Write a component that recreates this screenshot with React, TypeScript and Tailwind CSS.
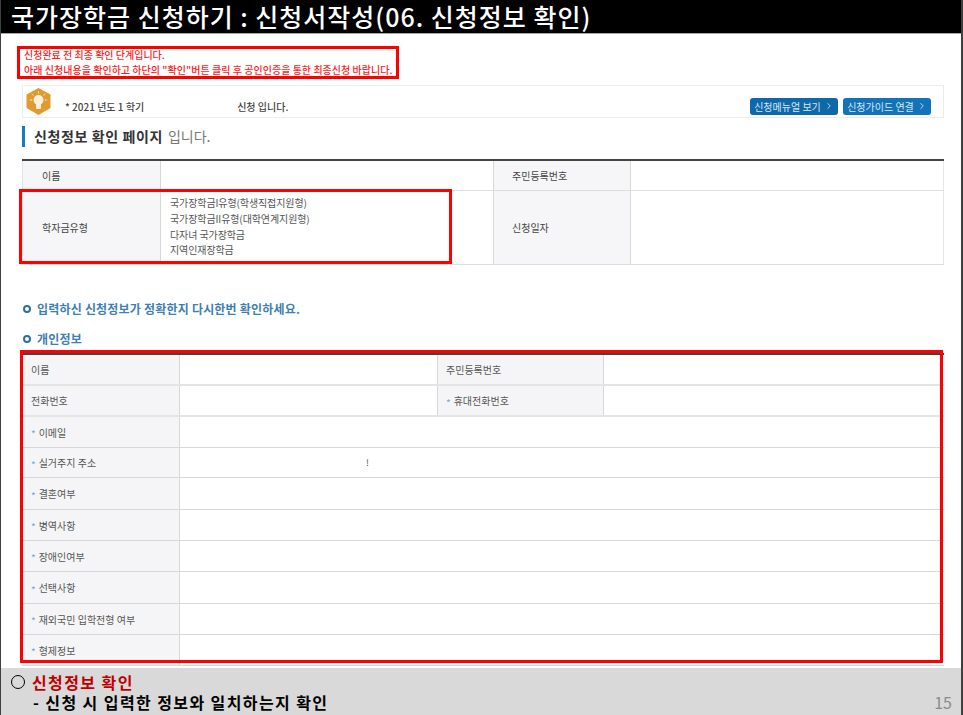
import { ChevronRight } from 'lucide-react';

const FONT = "font-['Noto_Sans_CJK_KR','Noto_Sans',sans-serif]";

const PERSONAL_ROWS = [
  { label: '이메일', height: 'h-[31px]' },
  { label: '실거주지 주소', height: 'h-[30px]', value: '!' },
  { label: '결혼여부', height: 'h-[32px]' },
  { label: '병역사항', height: 'h-[31px]' },
  { label: '장애인여부', height: 'h-[31px]' },
  { label: '선택사항', height: 'h-[32px]' },
  { label: '재외국민 입학전형 여부', height: 'h-[31px]' },
  { label: '형제정보', height: 'h-[31px]' },
];

const SCHOLARSHIPS = [
  '국가장학금I유형(학생직접지원형)',
  '국가장학금II유형(대학연계지원형)',
  '다자녀 국가장학금',
  '지역인재장학금',
];

function Star() {
  return <span className="mr-[3px] translate-y-[2px] text-[10px] leading-none text-[#6fa8de]">*</span>;
}

function BulbIcon() {
  return (
    <svg width="25" height="27" viewBox="0 0 25 27" className="shrink-0">
      <polygon points="12.5,0 24.5,6.5 24.5,20 12.5,27 0.5,20 0.5,6.5" fill="#e19a2e" />
      <circle cx="12.5" cy="12" r="5" fill="#f7f0dc" />
      <rect x="10" y="15.5" width="5" height="5.5" rx="1" fill="#f7f0dc" />
      <g stroke="#f7e3b5" strokeWidth="1" strokeLinecap="round">
        <path d="M12.5 3.6v1.6M6 6l1.2 1.1M19 6l-1.2 1.1M4.2 12h1.6M19.2 12h1.6" />
      </g>
    </svg>
  );
}

function GuideButton({ label, dark }: { label: string; dark?: boolean }) {
  return (
    <div
      className={`flex h-[17px] w-[88px] items-center justify-center gap-[3px] rounded-[3px] text-[10px] text-[#d7e8f5] ${
        dark ? 'bg-[#0f69a8]' : 'bg-[#1373b7]'
      }`}
    >
      {label}
      <ChevronRight size={10} strokeWidth={2} />
    </div>
  );
}

function SectionTitle({ children }: { children: string }) {
  return (
    <div className="flex items-center text-[12px] font-bold tracking-[0.2px] text-[#3d7fb5]">
      <span className="mr-[6px] h-[8px] w-[8px] rounded-full border-2 border-[#2f6f9f]" />
      {children}
    </div>
  );
}

export default function App() {
  return (
    <div className={`flex h-[715px] w-[963px] flex-col overflow-hidden border-l border-r-2 border-[#404040] bg-white ${FONT}`}>
      {/* Slide title */}
      <div className="h-[33px] shrink-0 whitespace-nowrap bg-black pl-[10px] text-[25px] font-medium leading-[33px] tracking-[1px] text-white">
        국가장학금 신청하기 : 신청서작성(06. 신청정보 확인)
      </div>
      <div className="h-px shrink-0 bg-[#a6a6a6]" />

      {/* Captured page */}
      <div className="relative min-h-0 flex-1 overflow-hidden">
        <div className="ml-[16px] mt-[12px] h-[33px] w-[382px] border-[3px] border-[#ff0000] pl-[4px] text-[10px] font-medium leading-[15px] text-[#ff1a1a]">
          <div className="-mt-[2px]">신청완료 전 최종 확인 단계입니다.</div>
          <div className="whitespace-nowrap tracking-[0.03px]">아래 신청내용을 확인하고 하단의 "확인"버튼 클릭 후 공인인증을 통한 최종신청 바랍니다.</div>
        </div>

        <div className="ml-[21px] mt-[6px] flex h-[33px] w-[922px] items-center border border-[#ececec] pl-[3px] pr-[12px] text-[10px] text-[#444]">
          <BulbIcon />
          <span className="ml-[14px] mt-[10px] font-medium">* 2021 년도 1 학기</span>
          <span className="ml-[93px] mt-[10px] font-medium">신청 입니다.</span>
          <div className="ml-auto mt-[9px] flex gap-[5px]">
            <GuideButton label="신청메뉴얼 보기" dark />
            <GuideButton label="신청가이드 연결" />
          </div>
        </div>

        <div className="ml-[21px] mt-[8px] flex h-[21px] items-center border-l-[3px] border-[#1b7ac4] pl-[9px] text-[14px] font-bold tracking-[0.6px] text-[#333]">
          신청정보 확인 페이지<span className="ml-[5px] font-normal tracking-normal text-[#777]">입니다.</span>
        </div>

        {/* Summary table */}
        <div className="relative ml-[21px] mt-[12px] w-[922px] border-t-2 border-[#444] text-[10px] text-[#444]">
          <div className="grid h-[30px] grid-cols-[138px_333px_138px_1fr] border-b border-[#ddd]">
            <div className="flex items-center border-l border-[#e3e3e3] bg-[#f6f6f8] pl-[19px]">이름</div>
            <div className="border-l border-[#d8d8d8]" />
            <div className="flex items-center border-x border-[#d8d8d8] bg-[#f6f6f8] pl-[18px]">주민등록번호</div>
            <div className="border-r border-[#e8e8e8]" />
          </div>
          <div className="grid h-[74px] grid-cols-[138px_333px_138px_1fr] border-b border-[#ddd]">
            <div className="flex items-center border-l border-[#e3e3e3] bg-[#f6f6f8] pl-[19px]">학자금유형</div>
            <div className="flex flex-col justify-center border-l border-[#d8d8d8] pb-[2px] pl-[9px] leading-[15.6px] tracking-[-0.1px] text-[#555]">
              {SCHOLARSHIPS.map((item) => (
                <div key={item}>{item}</div>
              ))}
            </div>
            <div className="flex items-center border-x border-[#d8d8d8] bg-[#f6f6f8] pl-[18px]">신청일자</div>
            <div className="border-r border-[#e8e8e8]" />
          </div>
          {/* Red highlight round the scholarship row */}
          <div className="absolute left-[-3px] top-[28px] h-[75px] w-[433px] border-[3px] border-[#ff0000]" />
        </div>

        <div className="ml-[22px] mt-[35px]">
          <SectionTitle>입력하신 신청정보가 정확한지 다시한번 확인하세요.</SectionTitle>
        </div>
        <div className="ml-[22px] mt-[12px]">
          <SectionTitle>개인정보</SectionTitle>
        </div>

        {/* Personal info table */}
        <div className="relative ml-[21px] mt-[5px] w-[922px] border-t-2 border-[#444] text-[10px] text-[#555]">
          <div className="grid h-[31px] grid-cols-[157px_258px_167px_1fr] border-b-2 border-[#e4e4e4]">
            <div className="flex items-center bg-[#f5f5f7] pl-[9px]">이름</div>
            <div className="border-l border-[#d8d8d8]" />
            <div className="flex items-center border-x border-[#d8d8d8] bg-[#f5f5f7] pl-[8px]">주민등록번호</div>
            <div />
          </div>
          <div className="grid h-[31px] grid-cols-[157px_258px_167px_1fr] border-b-2 border-[#e4e4e4]">
            <div className="flex items-center bg-[#f5f5f7] pl-[9px]">전화번호</div>
            <div className="border-l border-[#d8d8d8]" />
            <div className="flex items-center border-x border-[#d8d8d8] bg-[#f5f5f7] pl-[8px]">
              <Star />휴대전화번호
            </div>
            <div />
          </div>
          {PERSONAL_ROWS.map((row) => (
            <div key={row.label} className={`grid grid-cols-[157px_1fr] border-b border-[#d8d8d8] ${row.height}`}>
              <div className="flex items-center bg-[#f5f5f7] pl-[9px]">
                <Star />
                {row.label}
              </div>
              <div className="flex items-center border-l border-[#d8d8d8] pl-[186px] text-[9px]">{row.value}</div>
            </div>
          ))}
          {/* Red highlight round the whole table */}
          <div className="absolute left-[-2px] top-[-5px] h-[313px] w-[923px] border-[3px] border-[#ff0000]" />
        </div>
      </div>

      {/* Slide footer */}
      <div className="relative flex h-[47px] shrink-0 flex-col justify-center bg-[#d9d9d9] pl-[10px] text-[16px] font-bold leading-[20px] tracking-[1.4px] text-black">
        <div className="flex items-center">
          <span className="mr-[7px] h-[14px] w-[14px] rounded-full border-[1.5px] border-black" />
          <span className="text-[#c00000]">신청정보 확인</span>
        </div>
        <div className="pl-[22px]">- 신청 시 입력한 정보와 일치하는지 확인</div>
        <span className="absolute bottom-[3px] right-[9px] text-[16px] font-normal tracking-normal text-[#8c8c8c]">15</span>
      </div>
    </div>
  );
}
